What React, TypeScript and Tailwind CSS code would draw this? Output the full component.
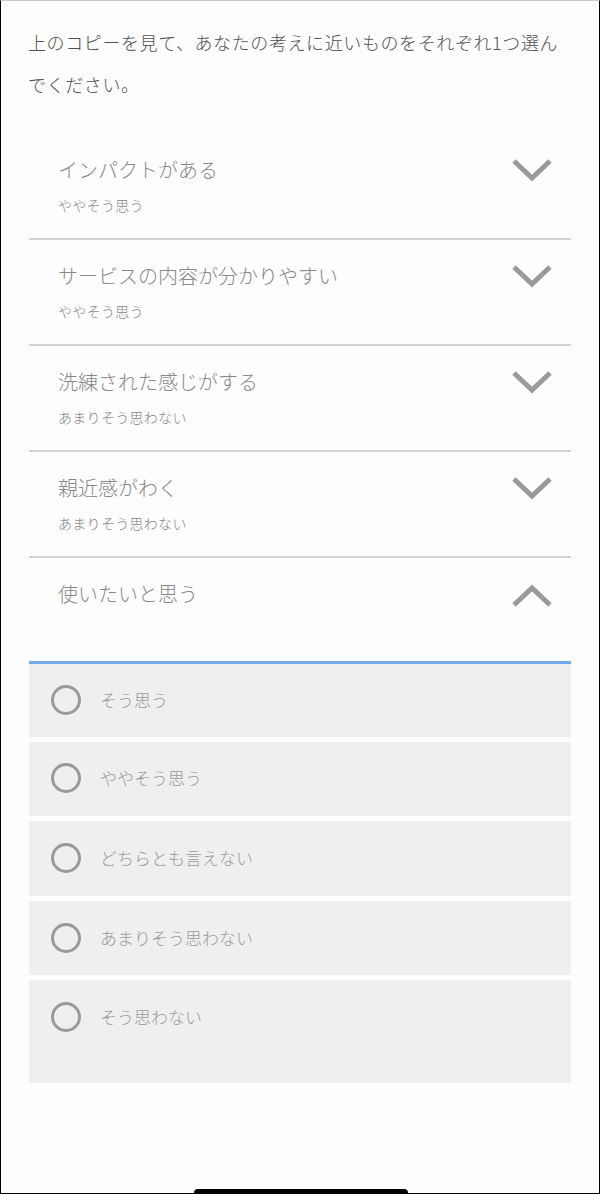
import React from 'react';

const questions = [
    { title: 'インパクトがある', answer: 'ややそう思う' },
    { title: 'サービスの内容が分かりやすい', answer: 'ややそう思う' },
    { title: '洗練された感じがする', answer: 'あまりそう思わない' },
    { title: '親近感がわく', answer: 'あまりそう思わない' },
];

// options with their box height and top padding
const options = [
    { label: 'そう思う', box: 'h-[73px] pt-[21px]' },
    { label: 'ややそう思う', box: 'h-[74px] pt-[21px]' },
    { label: 'どちらとも言えない', box: 'h-[75px] pt-[22px]' },
    { label: 'あまりそう思わない', box: 'h-[74px] pt-[22px]' },
    { label: 'そう思わない', box: 'h-[103px] pt-[22px]' },
];

const Chevron: React.FC<{ up?: boolean }> = ({ up }) => (
    <svg width="42" height="24" viewBox="0 0 42 24" className="shrink-0">
        <polyline
            points={up ? '3,21 21,4 39,21' : '3,3 21,20 39,3'}
            fill="none"
            stroke="#9a9a9a"
            strokeWidth="5"
        />
    </svg>
);

const App: React.FC = () => {
    return (
        <div
            className="relative w-[600px] h-[1194px] bg-[#fdfdfd] border-x border-b border-black border-t border-t-[#c8c8c8] overflow-hidden font-light"
            style={{ fontFamily: '"Noto Sans CJK JP", "Noto Sans", sans-serif' }}
        >
            <p className="pt-[20px] pl-[27px] pr-[24px] text-[18px] leading-[42px] tracking-[0.6px] text-[#505050]">
                上のコピーを見て、あなたの考えに近いものをそれぞれ1つ選んでください。
            </p>

            <div className="mx-[28px] mt-[29px]">
                {questions.map((q, i) => (
                    <div key={i} className="border-b-2 border-[#d2d2d2] pt-[21px] pb-[23px] pl-[29px] pr-[18px]">
                        <div className="flex items-center justify-between h-[30px]">
                            <span className="text-[20px] text-[#888888]">{q.title}</span>
                            <Chevron />
                        </div>
                        <div className="mt-[10px] text-[14px] leading-[20px] tracking-[0.3px] text-[#858585]">{q.answer}</div>
                    </div>
                ))}

                <div className="pt-[21px] h-[103px] pl-[29px] pr-[18px]">
                    <div className="flex items-center justify-between h-[30px]">
                        <span className="text-[20px] text-[#888888]">使いたいと思う</span>
                        <span className="mt-[4px]">
                            <Chevron up />
                        </span>
                    </div>
                </div>

                <div className="h-[3px] bg-[#72a9ef]"></div>
                <div className="flex flex-col gap-[5px]">
                    {options.map((o, i) => (
                        <div key={i} className={'bg-[#efefef] pl-[22px] ' + o.box}>
                            <div className="flex items-center gap-[19px] h-[30px]">
                                <span className="w-[30px] h-[30px] rounded-full border-[3px] border-[#9a9a9a] shrink-0"></span>
                                <span className="text-[17px] text-[#9a9a9a]">{o.label}</span>
                            </div>
                        </div>
                    ))}
                </div>
            </div>

            {/* home indicator */}
            <div className="absolute bottom-0 left-[193px] w-[214px] h-[4px] rounded-t-full bg-black"></div>
        </div>
    );
};

export default App;
